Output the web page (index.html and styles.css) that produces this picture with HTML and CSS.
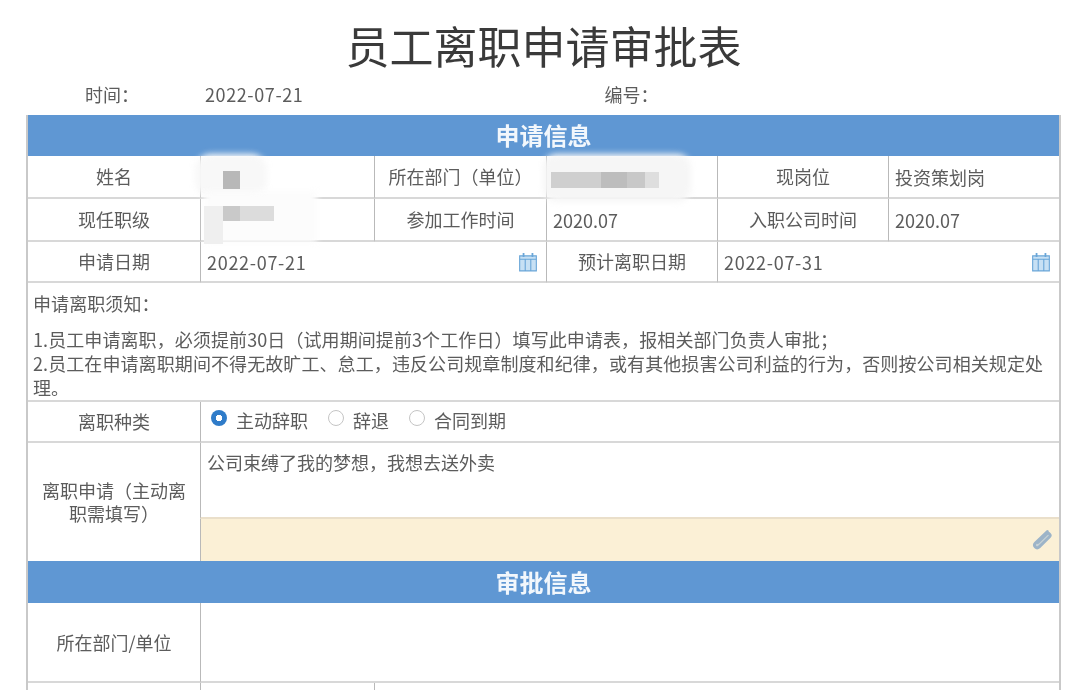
FILE: index.html
```html
<!DOCTYPE html>
<html lang="zh-CN">
<head>
<meta charset="utf-8">
<title>员工离职申请审批表</title>
<link rel="stylesheet" href="styles.css">
</head>
<body>
<main class="page">
  <h1 class="title">员工离职申请审批表</h1>
  <div class="meta">
    <div class="meta-label">时间：</div>
    <div class="meta-value">2022-07-21</div>
    <div class="meta-label meta-num">编号：</div>
  </div>
  <div class="form">
    <div class="band span-6">申请信息</div>

    <div class="cell label first">姓名</div>
    <div class="cell"></div>
    <div class="cell label">所在部门（单位）</div>
    <div class="cell"></div>
    <div class="cell label">现岗位</div>
    <div class="cell value">投资策划岗</div>

    <div class="cell label first">现任职级</div>
    <div class="cell"></div>
    <div class="cell label">参加工作时间</div>
    <div class="cell value">2020.07</div>
    <div class="cell label">入职公司时间</div>
    <div class="cell value">2020.07</div>

    <div class="cell label first">申请日期</div>
    <div class="cell value span-2 date"><span class="date-text">2022-07-21</span>
      <svg class="cal" viewBox="0 0 18 18"><path d="M1.5 3.5h15v13.5h-15z" fill="#c7e0f4" stroke="#6aa6d8"/><path d="M6.5 6v11M11.5 6v11M1.5 6.5h15" stroke="#6aa6d8" fill="none"/><path d="M5 1v3.5M13 1v3.5" stroke="#6aa6d8" stroke-width="1.6"/></svg>
    </div>
    <div class="cell label">预计离职日期</div>
    <div class="cell value span-2 date"><span class="date-text">2022-07-31</span>
      <svg class="cal" viewBox="0 0 18 18"><path d="M1.5 3.5h15v13.5h-15z" fill="#c7e0f4" stroke="#6aa6d8"/><path d="M6.5 6v11M11.5 6v11M1.5 6.5h15" stroke="#6aa6d8" fill="none"/><path d="M5 1v3.5M13 1v3.5" stroke="#6aa6d8" stroke-width="1.6"/></svg>
    </div>

    <div class="cell notice span-6">
      <p class="notice-head">申请离职须知：</p>
      <p class="notice-body">1.员工申请离职，必须提前30日（试用期间提前3个工作日）填写此申请表，报相关部门负责人审批；<br>2.员工在申请离职期间不得无故旷工、怠工，违反公司规章制度和纪律，或有其他损害公司利益的行为，否则按公司相关规定处理。</p>
    </div>

    <div class="cell label first">离职种类</div>
    <div class="cell radios span-5">
      <label class="radio"><input type="radio" name="kind" checked>主动辞职</label>
      <label class="radio"><input type="radio" name="kind">辞退</label>
      <label class="radio"><input type="radio" name="kind">合同到期</label>
    </div>

    <div class="cell label first tall">离职申请（主动离职需填写）</div>
    <div class="cell reason span-5">公司束缚了我的梦想，我想去送外卖</div>
    <div class="cell attach span-5">
      <svg class="clip" viewBox="0 0 20 20"><path d="M14.5 3 4.5 12.5c-2.2 2.3.9 5.4 3.2 3.2l8.6-8.4c1.5-1.6-.8-3.8-2.4-2.3L6.6 12" fill="#c9d3d6" stroke="#9db4c8" stroke-width="2.4" stroke-linecap="round"/></svg>
    </div>

    <div class="band span-6">审批信息</div>

    <div class="cell label first">所在部门/单位</div>
    <div class="cell span-5"></div>

    <div class="cell stub first"></div>
    <div class="cell stub"></div>
    <div class="cell stub span-4"></div>

    <div class="blur blob-a"></div>
    <div class="blur blob-b"></div>
    <div class="blur blob-c"></div>
    <div class="px px-a1"></div>
    <div class="px px-b0"></div>
    <div class="px px-b1"></div>
    <div class="px px-b2"></div>
    <div class="px px-c1"></div>
    <div class="px px-c2"></div>
    <div class="px px-c3"></div>
    <div class="px px-c4"></div>
  </div>
</main>
</body>
</html>
```

FILE: styles.css
```css
* { box-sizing: border-box; }
html, body { margin: 0; height: 699px; overflow: hidden; background: #fff; }
body {
  font-family: "Noto Sans CJK SC", "Noto Sans", sans-serif;
  font-size: 18px;
  color: #5c5c5c;
}
.page { padding: 15px 19px 0 26px; filter: blur(0.45px); }
.title {
  margin: 0;
  height: 60px;
  line-height: 60px;
  font-size: 44px;
  font-weight: 400;
  text-align: center;
  color: #3a3a3a;
}
.meta {
  display: grid;
  grid-template-columns: 174px 174px 172px 171px;
  height: 30px;
  margin-top: 4px;
  align-items: center;
}
.meta-label { text-align: center; padding-right: 2px; }
.meta-value { grid-column: span 2; padding-left: 5px; letter-spacing: 0.6px; }
.meta-num { padding-right: 0; }
.form {
  display: grid;
  position: relative;
  grid-template-columns: 172px 174px 172px 171px 171px 171px;
  grid-template-rows: 41px 43px 43px 41px 119px 41px 76px 42px 42px 80px 7px;
  width: 1035px;
  margin-top: 6px;
  border-left: 2px solid #c9c9c9;
  border-right: 2px solid #c9c9c9;
}
.span-2 { grid-column: span 2; }
.span-4 { grid-column: span 4; }
.span-5 { grid-column: span 5; }
.span-6 { grid-column: span 6; }
.band {
  display: flex;
  align-items: center;
  justify-content: center;
  padding-bottom: 2px;
  background: #5f97d3;
  color: #f2f7fc;
  font-size: 24px;
  font-weight: 700;
}
.cell {
  display: flex;
  align-items: center;
  border-bottom: 2px solid #d8d8d8;
  border-left: 1px solid #b9b9b9;
  min-width: 0;
}
.first { border-left: 0; }
.label {
  justify-content: center;
  text-align: center;
  padding: 0 10px;
  line-height: 23px;
}
.value { padding-left: 6px; }
.date { justify-content: space-between; padding-right: 8px; }
.date-text { letter-spacing: 0.7px; }
.cal { width: 20px; height: 20px; flex: none; }
.notice {
  display: block;
  padding: 8px 5px 0;
  border-left: 0;
  line-height: 24px;
  letter-spacing: 0.09px;
}
.notice p { margin: 0; }
.notice-head { margin-bottom: 12px !important; }
.radios { gap: 20px; padding: 0 0 3px 10px; }
.radio { display: flex; align-items: center; gap: 9px; }
.radio input {
  appearance: none;
  margin: 0;
  width: 16px;
  height: 16px;
  border: 1px solid #c4c4c4;
  border-radius: 50%;
  background: #fff;
  position: relative;
  top: -2px;
}
.radio input:checked {
  border: 0;
  background: radial-gradient(circle, #fff 0 3px, #2f7cc9 3.5px);
}
.tall { grid-row: span 2; border-bottom: 0; padding: 0 12px; }
.reason { align-items: flex-start; padding: 6px 6px; border-bottom: 2px solid #eadfca; }
.attach {
  justify-content: flex-end;
  padding-right: 5px;
  background: #fbf0d6;
  border-bottom: 0;
}
.clip { width: 24px; height: 24px; }
.stub { border-bottom: 0; }

.blur, .px { position: absolute; }
.blur { background: #f8f8f8; filter: blur(3px); }
.blob-a { left: 167px; top: 39px; width: 72px; height: 44px; border-radius: 16px; }
.blob-b { left: 177px; top: 76px; width: 112px; height: 52px; background: #fcfcfc; }
.blob-c { left: 515px; top: 39px; width: 148px; height: 48px; border-radius: 14px; background: #f6f6f6; }
.px-a1 { left: 195px; top: 56px; width: 17px; height: 18px; background: #b8b8b8; }
.px-b0 { left: 176px; top: 91px; width: 19px; height: 38px; background: #efefef; }
.px-b1 { left: 195px; top: 91px; width: 17px; height: 15px; background: #c9c9c9; }
.px-b2 { left: 212px; top: 91px; width: 34px; height: 15px; background: #dcdcdc; }
.px-c1 { left: 523px; top: 57px; width: 50px; height: 16px; background: #cfcfcf; }
.px-c2 { left: 573px; top: 57px; width: 26px; height: 16px; background: #bdbdbd; }
.px-c3 { left: 599px; top: 57px; width: 18px; height: 16px; background: #c8c8c8; }
.px-c4 { left: 617px; top: 57px; width: 14px; height: 16px; background: #dedede; }
```
